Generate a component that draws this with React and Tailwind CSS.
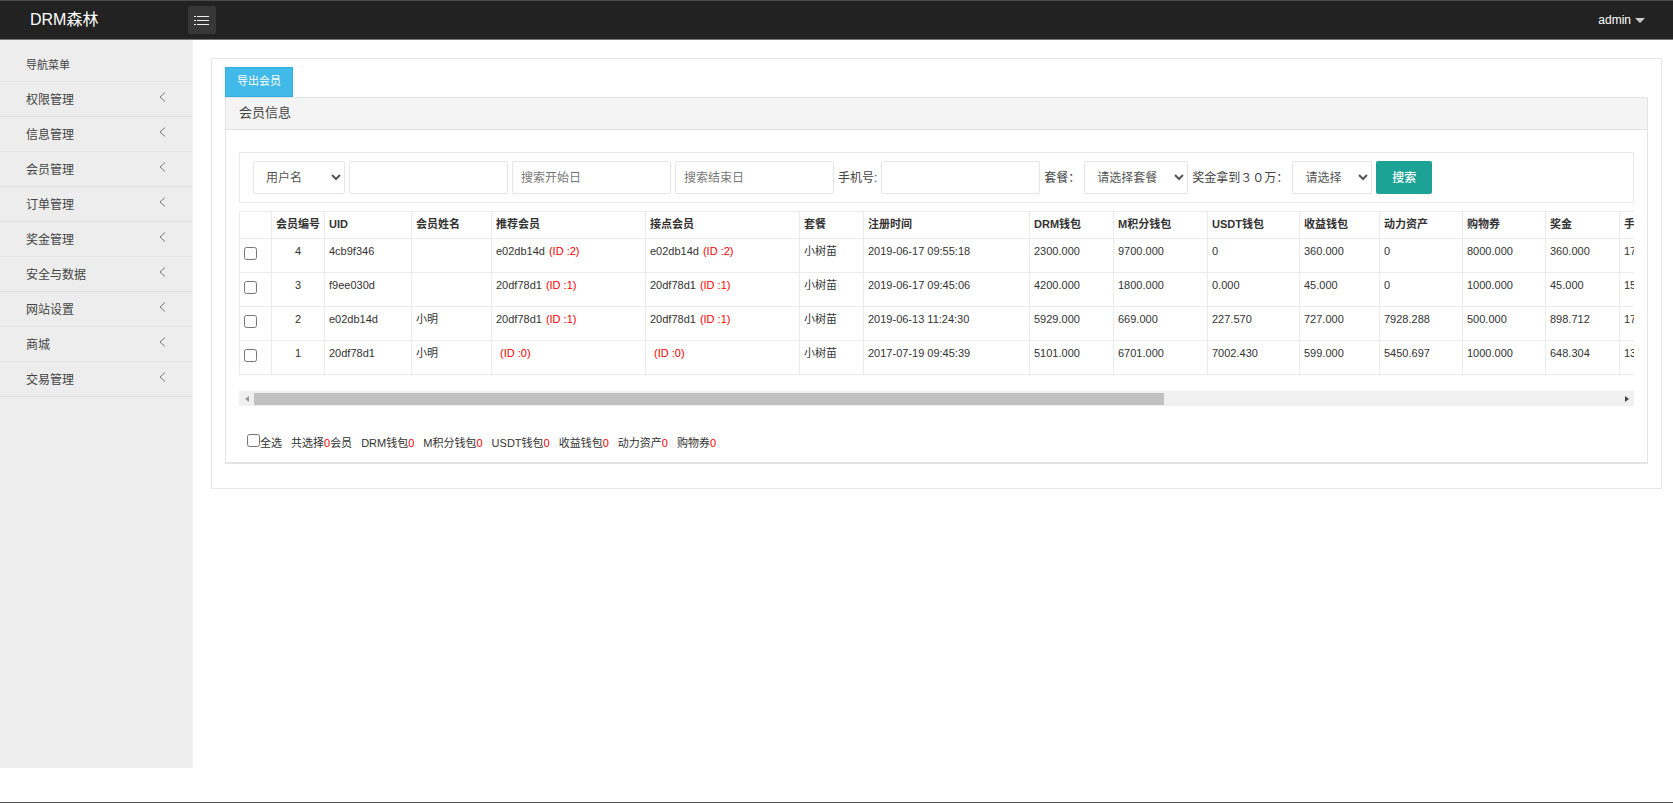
import React from "react";

const menus = [
  "权限管理",
  "信息管理",
  "会员管理",
  "订单管理",
  "奖金管理",
  "安全与数据",
  "网站设置",
  "商城",
  "交易管理",
];

const columns = [
  { title: "会员编号", width: "w-[53px]" },
  { title: "UID", width: "w-[87px]" },
  { title: "会员姓名", width: "w-[80px]" },
  { title: "推荐会员", width: "w-[154px]" },
  { title: "接点会员", width: "w-[154px]" },
  { title: "套餐", width: "w-[64px]" },
  { title: "注册时间", width: "w-[166px]" },
  { title: "DRM钱包", width: "w-[84px]" },
  { title: "M积分钱包", width: "w-[94px]" },
  { title: "USDT钱包", width: "w-[92px]" },
  { title: "收益钱包", width: "w-[80px]" },
  { title: "动力资产", width: "w-[83px]" },
  { title: "购物券", width: "w-[83px]" },
  { title: "奖金", width: "w-[74px]" },
  { title: "手机号", width: "w-[110px]" },
];

const members = [
  { id: "4", uid: "4cb9f346", name: "", parent: "e02db14d", parentId: "2", time: "2019-06-17 09:55:18", values: ["2300.000", "9700.000", "0", "360.000", "0", "8000.000", "360.000", "17"] },
  { id: "3", uid: "f9ee030d", name: "", parent: "20df78d1", parentId: "1", time: "2019-06-17 09:45:06", values: ["4200.000", "1800.000", "0.000", "45.000", "0", "1000.000", "45.000", "15"] },
  { id: "2", uid: "e02db14d", name: "小明", parent: "20df78d1", parentId: "1", time: "2019-06-13 11:24:30", values: ["5929.000", "669.000", "227.570", "727.000", "7928.288", "500.000", "898.712", "17"] },
  { id: "1", uid: "20df78d1", name: "小明", parent: "", parentId: "0", time: "2017-07-19 09:45:39", values: ["5101.000", "6701.000", "7002.430", "599.000", "5450.697", "1000.000", "648.304", "13"] },
];

const totals = ["DRM钱包", "M积分钱包", "USDT钱包", "收益钱包", "动力资产", "购物券"];

const inputClass =
  "w-[159px] h-[33px] px-2 border border-[#e5e6e7] rounded-xs bg-white placeholder:text-[#777] outline-none";
const selectClass =
  "h-[33px] pl-2 border border-[#e5e6e7] rounded-xs bg-white text-[#555] outline-none";
const cellClass = "border border-[#ebebeb] px-1 pt-1 align-top";

const Header = () => (
  <header className="flex items-center h-10 pl-[30px] pr-7 bg-[#222] border-t border-t-[#4b4b4b] border-b border-b-[#777] text-white">
    <a href="#" className="w-[158px] text-base leading-5">DRM森林</a>
    <button aria-label="菜单" className="flex items-center justify-center size-7 rounded-xs bg-[#373737]">
      <svg width="16" height="11" viewBox="0 0 16 11" stroke="#eee" strokeWidth="1">
        <path d="M0 1.5h2M3 1.5h12M0 5.5h2M3 5.5h12M0 9.5h2M3 9.5h12" />
      </svg>
    </button>
    <button className="flex items-center gap-1 ml-auto text-xs">
      admin
      <svg width="10" height="5" viewBox="0 0 10 5" fill="#ccc">
        <path d="M0 0h10L5 5z" />
      </svg>
    </button>
  </header>
);

const Sidebar = () => (
  <nav className="w-[193px] shrink-0 bg-[#ededed] border-r border-[#f3f3f3] text-[#444]">
    <div className="h-[42px] pl-[26px] pt-[15px] border-b border-[#e5e5e5] text-[11px] leading-5">导航菜单</div>
    <ul>
      {menus.map((menu) => (
        <li key={menu} className="border-b border-[#e3e3e3]">
          <a href="#" className="flex justify-between h-[34px] px-[26px] text-xs leading-9">
            {menu}
            <svg width="7" height="10" viewBox="0 0 7 10" fill="none" stroke="#777" strokeWidth="1" className="mt-[10px]">
              <path d="M6 0.5L1 5L6 9.5" />
            </svg>
          </a>
        </li>
      ))}
    </ul>
  </nav>
);

const SearchBar = () => (
  <form className="flex flex-wrap items-center gap-1 px-[13px] py-2 border border-[#e9e9e9] text-xs text-[#444]">
    <select aria-label="搜索字段" className={`${selectClass} w-[92px]`}>
      <option>用户名</option>
    </select>
    <input type="text" aria-label="关键字" className={inputClass} />
    <input type="text" aria-label="搜索开始日" placeholder="搜索开始日" className={inputClass} />
    <input type="text" aria-label="搜索结束日" placeholder="搜索结束日" className={inputClass} />
    <label htmlFor="phone">手机号:</label>
    <input id="phone" type="text" className={inputClass} />
    <label htmlFor="package">套餐：</label>
    <select id="package" className={`${selectClass} w-[104px]`}>
      <option>请选择套餐</option>
    </select>
    <label htmlFor="bonus">奖金拿到３０万：</label>
    <select id="bonus" className={`${selectClass} w-20`}>
      <option>请选择</option>
    </select>
    <button type="button" className="w-14 h-[33px] rounded-xs bg-[#1ca396] text-white font-medium">搜索</button>
  </form>
);

const Relation = ({ member }) => (
  <>
    {member.parent}
    <span className="pl-1 text-[#f00]">(ID :{member.parentId})</span>
  </>
);

const MemberTable = () => (
  <div className="mt-2 overflow-hidden">
    <table className="table-fixed w-[1490px] border-collapse text-[11px] leading-4 text-[#333] whitespace-nowrap">
      <thead>
        <tr className="h-[27px] text-left">
          <th className={`${cellClass} w-8`} />
          {columns.map((column) => (
            <th key={column.title} className={`${cellClass} ${column.width}`}>{column.title}</th>
          ))}
        </tr>
      </thead>
      <tbody>
        {members.map((member) => (
          <tr key={member.id} className="h-[34px]">
            <td className={cellClass}>
              <input type="checkbox" aria-label={`选择会员${member.id}`} className="block mt-1 size-[13px]" />
            </td>
            <td className={`${cellClass} text-center`}>{member.id}</td>
            <td className={cellClass}>{member.uid}</td>
            <td className={cellClass}>{member.name}</td>
            <td className={cellClass}><Relation member={member} /></td>
            <td className={cellClass}><Relation member={member} /></td>
            <td className={cellClass}>小树苗</td>
            <td className={cellClass}>{member.time}</td>
            {member.values.map((value, i) => (
              <td key={i} className={cellClass}>{value}</td>
            ))}
          </tr>
        ))}
      </tbody>
    </table>
  </div>
);

const ScrollBar = () => (
  <div className="flex items-center h-[15px] mt-4 bg-[#f0f0f0]">
    <button aria-label="向左" className="flex items-center justify-center w-[15px] h-full">
      <svg width="4" height="6" viewBox="0 0 4 6" fill="#999"><path d="M4 0v6L0 3z" /></svg>
    </button>
    <div className="flex-1">
      <div className="w-2/3 h-3 bg-[#c1c1c1]" />
    </div>
    <button aria-label="向右" className="flex items-center justify-center w-[15px] h-full">
      <svg width="4" height="6" viewBox="0 0 4 6" fill="#444"><path d="M0 0v6L4 3z" /></svg>
    </button>
  </div>
);

const Totals = () => (
  <div className="flex items-center gap-[9px] mt-7 ml-2 text-[11px] leading-4 text-[#333]">
    <label className="flex items-center">
      <input type="checkbox" className="size-[13px] mb-1" />
      全选
    </label>
    <span>共选择<span className="text-[#f00]">0</span>会员</span>
    {totals.map((name) => (
      <span key={name}>{name}<span className="text-[#f00]">0</span></span>
    ))}
  </div>
);

const App = () => {
  return (
    <div className="flex flex-col min-h-screen bg-white border-b border-[#555] font-['Liberation_Sans','Noto_Sans_CJK_SC',sans-serif]">
      <Header />

      <div className="flex flex-1 mb-[34px]">
        <Sidebar />

        {/* Page content */}
        <main className="flex-1 min-w-0 pt-[18px] pl-[18px] pr-[11px]">
          <div className="px-[13px] pt-2 pb-6 border border-[#e7e7e7]">
            <button className="block w-[68px] h-[30px] pb-[2px] border border-[#2fb0e4] bg-[#41b9e9] text-[11px] text-white">
              导出会员
            </button>

            <section className="border border-[#e4e4e4] border-b-2">
              <h1 className="h-8 pl-[13px] bg-[#f4f4f4] border-b border-[#e4e4e4] text-[13px] leading-[30px] text-[#444]">
                会员信息
              </h1>
              <div className="px-[13px] pt-[22px] pb-[11px]">
                <SearchBar />
                <MemberTable />
                <ScrollBar />
                <Totals />
              </div>
            </section>
          </div>
        </main>
      </div>
    </div>
  );
};

export default App;
